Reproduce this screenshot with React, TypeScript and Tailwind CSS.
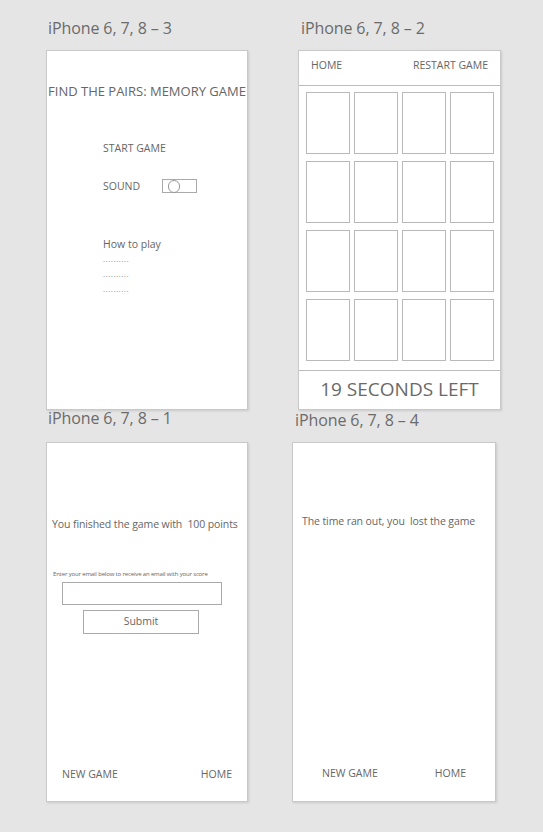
import React from 'react';

const font = { fontFamily: '"Open Sans", "Noto Sans", sans-serif' };

const Board = ({ className = '', children }: { className?: string; children?: React.ReactNode }) => (
    <div className={`bg-white border border-[#c9c9c9] shadow-[1px_1px_2px_rgba(0,0,0,0.12)] h-[360px] ${className}`}>
        {children}
    </div>
);

const Title = ({ text, className = '' }: { text: string; className?: string }) => (
    <div className={`text-[16px] tracking-[-0.1px] text-[#6b6b6b] whitespace-nowrap ${className}`}>{text}</div>
);

const StartScreen = () => (
    <Board className="w-[202px] flex flex-col text-[#666]">
        <div className="mt-[32px] h-[16px] leading-[16px] text-[13px] text-center whitespace-nowrap">FIND THE PAIRS: MEMORY GAME</div>
        <div className="pl-[56px] flex flex-col text-[10.5px]">
            <div className="mt-[41px] h-[16px] leading-[16px]">START GAME</div>
            <div className="mt-[22px] h-[16px] leading-[16px] flex items-center">
                <span className="w-[59px]">SOUND</span>
                {/* toggle */}
                <div className="w-[35px] h-[14px] border border-[#aaa] flex items-center pl-[5px]">
                    <div className="w-[12px] h-[13px] rounded-full border border-[#999]"></div>
                </div>
            </div>
            <div className="mt-[42px] h-[16px] leading-[16px]">How to play</div>
            <div className="-mt-[1px] flex flex-col text-[8px] text-[#888] tracking-[0.5px]">
                <div className="h-[15px] leading-[15px]">..........</div>
                <div className="h-[15px] leading-[15px]">..........</div>
                <div className="h-[15px] leading-[15px]">..........</div>
            </div>
        </div>
    </Board>
);

const GameScreen = () => (
    <Board className="w-[203px] flex flex-col text-[#666]">
        <div className="h-[35px] shrink-0 pb-[4px] border-b border-[#bbb] flex items-center justify-between px-[12px] text-[10.5px]">
            <span>HOME</span>
            <span>RESTART GAME</span>
        </div>
        <div className="mt-[6px] pl-[7px] pr-[6px] grid grid-cols-4 gap-x-[4px] gap-y-[7px]">
            {Array.from({ length: 16 }).map((_, i) => (
                <div key={i} className="h-[62px] border border-[#b9b9b9]"></div>
            ))}
        </div>
        <div className="mt-[9px] h-[38px] border-t border-[#bbb] flex items-center justify-center text-[19px] text-[#6a6a6a] whitespace-nowrap">
            19 SECONDS LEFT
        </div>
    </Board>
);

const FinishScreen = () => (
    <Board className="w-[202px] flex flex-col text-[#666]">
        <div className="mt-[73px] pl-[5px] h-[16px] leading-[16px] text-[10.5px] tracking-[-0.1px] whitespace-nowrap">You finished the game with&nbsp; 100 points</div>
        <div className="mt-[37px] pl-[6px] h-[10px] leading-[10px] text-[6px] tracking-[-0.15px] whitespace-nowrap">Enter your email below to receive an email with your score</div>
        <div className="mt-[3px] ml-[15px] w-[160px] h-[23px] border border-[#aaa]"></div>
        <div className="mt-[5px] ml-[36px] w-[116px] h-[24px] border border-[#aaa] flex items-center justify-center text-[10.5px]">Submit</div>
        <div className="mt-auto mb-[19px] px-[15px] h-[16px] leading-[16px] flex justify-between text-[10.5px]">
            <span>NEW GAME</span>
            <span>HOME</span>
        </div>
    </Board>
);

const LostScreen = () => (
    <Board className="w-[204px] flex flex-col text-[#666]">
        <div className="mt-[70px] pl-[9px] h-[16px] leading-[16px] text-[10.5px] tracking-[-0.1px] whitespace-nowrap">The time ran out, you&nbsp; lost the game</div>
        <div className="mt-auto mb-[20px] px-[29px] h-[16px] leading-[16px] flex justify-between text-[10.5px]">
            <span>NEW GAME</span>
            <span>HOME</span>
        </div>
    </Board>
);

export default function App() {
    return (
        <div className="w-[543px] h-[832px] bg-[#e5e5e5] overflow-hidden flex flex-col" style={font}>
            <div className="flex pt-[16px]">
                <div className="ml-[46px] flex flex-col">
                    <Title text="iPhone 6, 7, 8 – 3" className="h-[24px] leading-[24px] ml-[2px]" />
                    <div className="mt-[10px]"><StartScreen /></div>
                </div>
                <div className="ml-[50px] flex flex-col">
                    <Title text="iPhone 6, 7, 8 – 2" className="h-[24px] leading-[24px] ml-[3px]" />
                    <div className="mt-[10px]"><GameScreen /></div>
                </div>
            </div>
            <div className="flex">
                <div className="ml-[46px] flex flex-col">
                    <Title text="iPhone 6, 7, 8 – 1" className="h-[16px] leading-[16px] ml-[2px]" />
                    <div className="mt-[16px]"><FinishScreen /></div>
                </div>
                <div className="ml-[44px] flex flex-col">
                    <Title text="iPhone 6, 7, 8 – 4" className="mt-[2px] h-[16px] leading-[16px] ml-[3px]" />
                    <div className="mt-[14px]"><LostScreen /></div>
                </div>
            </div>
        </div>
    );
}
